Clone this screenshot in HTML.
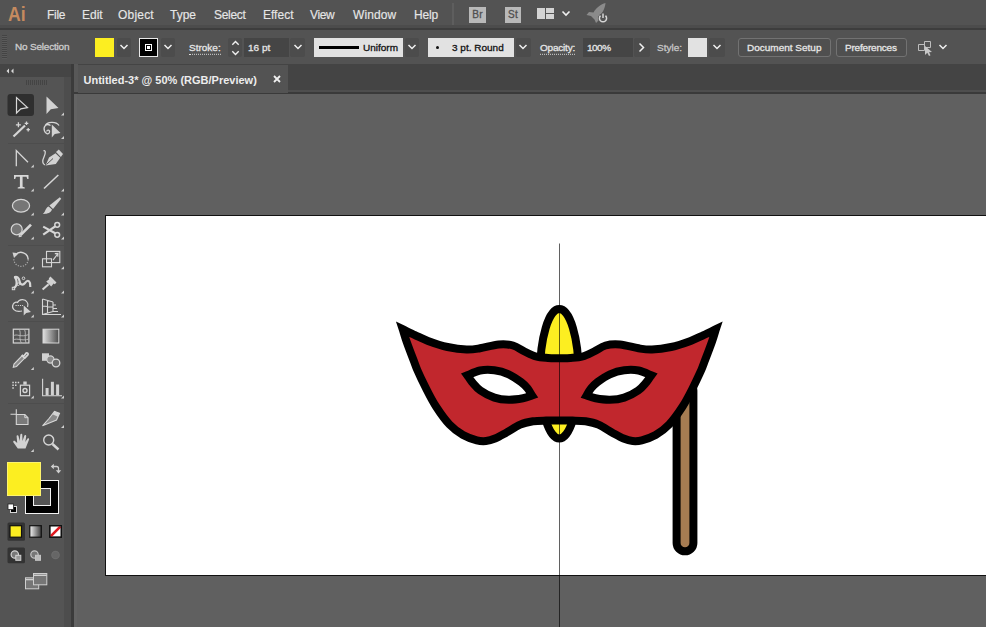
<!DOCTYPE html>
<html><head><meta charset="utf-8"><title>Untitled-3</title>
<style>
*{box-sizing:border-box;margin:0;padding:0}
html,body{width:986px;height:627px;overflow:hidden;background:#606060;font-family:"Liberation Sans",sans-serif;color:#e4e4e4}
.a{position:absolute}
.t{position:absolute;white-space:nowrap;font-size:12px;line-height:14px;color:#e6e6e6}
#menubar{left:0;top:0;width:986px;height:30px;background:linear-gradient(to bottom,#535353 0,#535353 25.500px,#4c4c4c 25.500px,#4c4c4c 28px,#3d3d3d 28px,#3d3d3d 30px)}
#ctrl{left:0;top:30px;width:986px;height:34px;background:#535353}
#tabbar{left:74px;top:64px;width:912px;height:30px;background:linear-gradient(to bottom,#444 0,#444 26px,#4e4e4e 26px,#4e4e4e 28px,#3a3a3a 28px,#3a3a3a 30px)}
#tab{left:77px;top:65px;width:210.500px;height:27.500px;background:#535353}
#tools{left:0;top:64px;width:72px;height:563px;background:linear-gradient(to right,#545454 0,#545454 64.5px,#4d4d4d 64.5px,#4d4d4d 72px)}
#toolshead{left:0;top:64px;width:72px;height:13px;background:#454545}
#toolsedge{left:71px;top:64px;width:7px;height:563px;background:linear-gradient(to right,#3b3b3b 0,#3b3b3b 3px,#636363 3px,#636363 6.5px,#606060 6.5px)}
#artboard{left:105px;top:215px;width:900px;height:361px;background:#fff;border:1px solid #111}
.dd{position:absolute;background:#4c4c4c;border-radius:2px}
.c{-webkit-text-stroke:0.3px currentColor;transform:scaleY(0.92);transform-origin:0 79%}
.m{-webkit-text-stroke:0.15px currentColor;transform:scaleY(1.06);transform-origin:0 80%}
.lbox{position:absolute;background:#e2e2e2}
.dbox{position:absolute;background:#454545}
.btn{position:absolute;border:1px solid #727272;border-radius:3px;background:#4f4f4f}
</style></head><body>
<div class="a" id="menubar"></div>
<div class="a" id="ctrl"></div>
<div class="a" id="tabbar"></div>
<div class="a" id="tab"></div>
<div class="a" id="tools"></div>
<div class="a" id="toolshead"></div>
<div class="a" id="toolsedge"></div>
<div class="a" style="left:74px;top:64px;width:4px;height:30px;background:linear-gradient(to bottom,#585858 0,#585858 28.500px,#3a3a3a 28.500px)"></div>
<div class="a" id="artboard"></div>

<!-- MENU -->
<div class="t" style="left:8px;top:1px;font-size:21px;line-height:26px;font-weight:bold;color:#c58a5f;transform:scaleX(0.84);transform-origin:0 0">Ai</div>
<div class="t m" style="left:47px;top:8px;letter-spacing:-0.3px">File</div>
<div class="t m" style="left:82px;top:8px">Edit</div>
<div class="t m" style="left:118px;top:8px;letter-spacing:0.2px">Object</div>
<div class="t m" style="left:170px;top:8px">Type</div>
<div class="t m" style="left:214px;top:8px;letter-spacing:-0.3px">Select</div>
<div class="t m" style="left:263px;top:8px">Effect</div>
<div class="t m" style="left:310px;top:8px;letter-spacing:-0.4px">View</div>
<div class="t m" style="left:353px;top:8px;letter-spacing:0.1px">Window</div>
<div class="t m" style="left:414px;top:8px;letter-spacing:-0.15px">Help</div>

<!-- MENUX -->
<div class="a" style="left:452px;top:3px;width:2px;height:22px;background:#5e5e5e"></div>
<div class="a" style="left:469px;top:7px;width:17px;height:16px;background:#b9b9b9"></div>
<div class="t" style="left:469px;top:8px;width:17px;text-align:center;font-size:10px;color:#505050;letter-spacing:0.3px;-webkit-text-stroke:0.3px #505050">Br</div>
<div class="a" style="left:505px;top:7px;width:16px;height:16px;background:#b9b9b9"></div>
<div class="t" style="left:505px;top:8px;width:16px;text-align:center;font-size:10px;color:#505050;letter-spacing:0.3px;-webkit-text-stroke:0.3px #505050">St</div>
<div class="a" style="left:537px;top:8px;width:8px;height:11px;background:#d4d4d4"></div>
<div class="a" style="left:546px;top:8px;width:8px;height:5px;background:#d4d4d4"></div>
<div class="a" style="left:546px;top:14px;width:8px;height:5px;background:#d4d4d4"></div>
<svg class="a" style="left:561px;top:9px" width="10" height="8"><path d="M1.500 2.500 L5 6 L8.500 2.500" fill="none" stroke="#f0f0f0" stroke-width="1.600"/></svg>
<svg class="a" style="left:584px;top:0" width="28" height="28" viewBox="584 0 28 28"><path d="M605.500 3 C601 4 596 8 593.500 12.500 L589 12 L586.500 15 L591 16 L594.500 19.500 L596 23 L598.500 20.500 L598 17 C602 14 605 9 605.500 3 Z" fill="#8b8b8b"/><circle cx="603" cy="18.200" r="4.800" fill="#535353"/><path d="M600.500 15.600 A3.600 3.600 0 1 0 605.500 15.600" fill="none" stroke="#d6d6d6" stroke-width="1.500"/><path d="M603 13.500 V18" stroke="#d6d6d6" stroke-width="1.500"/></svg>
<div class="t" style="left:83.500px;top:72.800px;font-size:11px;font-weight:bold;color:#ededed;transform:scaleY(0.95);transform-origin:0 79%" id="tabtxt">Untitled-3* @ 50% (RGB/Preview)</div>
<svg class="a" style="left:272px;top:74px" width="10" height="10"><path d="M2 2 L8 8 M8 2 L2 8" stroke="#f0f0f0" stroke-width="1.800" fill="none"/></svg>
<!-- /MENUX -->
<!-- CONTROL BAR -->
<div class="a" style="left:2px;top:35px;width:5px;height:24px;background:repeating-linear-gradient(to bottom,#444 0,#444 1px,#5a5a5a 1px,#5a5a5a 2px)"></div>
<div class="t c" style="left:15px;top:40px;font-size:10px;letter-spacing:-0.2px;color:#cdcdcd" id="nosel">No Selection</div>
<div class="a" style="left:95px;top:38px;width:19px;height:19px;background:#fcee21"></div>
<div class="dd" style="left:117px;top:38px;width:14px;height:19px"></div>
<svg class="a" style="left:119px;top:43px" width="10" height="8"><path d="M1.5 2 L5 5.5 L8.5 2" fill="none" stroke="#f0f0f0" stroke-width="1.5"/></svg>
<div class="a" style="left:139px;top:38px;width:19px;height:19px;background:#000;border:1px solid #e8e8e8"></div>
<div class="a" style="left:145px;top:44px;width:7px;height:7px;background:#000;border:1px solid #fff"></div>
<div class="a" style="left:147px;top:46px;width:3px;height:3px;background:#fff"></div>
<div class="dd" style="left:161px;top:38px;width:14px;height:19px"></div>
<svg class="a" style="left:163px;top:43px" width="10" height="8"><path d="M1.5 2 L5 5.5 L8.5 2" fill="none" stroke="#f0f0f0" stroke-width="1.5"/></svg>
<div class="t c" style="left:189px;top:41px;font-size:10px;border-bottom:1px dotted #ddd;line-height:13px" id="stroke">Stroke:</div>
<div class="dd" style="left:228px;top:38px;width:14px;height:19px"></div>
<svg class="a" style="left:230px;top:38px" width="11" height="20"><path d="M2.3 6.8 L5.5 3.6 L8.7 6.8 M2.3 13.2 L5.5 16.4 L8.7 13.2" fill="none" stroke="#f0f0f0" stroke-width="1.4"/></svg>
<div class="dbox" style="left:244px;top:38px;width:45px;height:19px"></div>
<div class="t c" style="left:248px;top:41px;font-size:10px" id="pt16">16 pt</div>
<div class="dd" style="left:290px;top:38px;width:15px;height:19px"></div>
<svg class="a" style="left:293px;top:43px" width="10" height="8"><path d="M1.5 2 L5 5.5 L8.5 2" fill="none" stroke="#f0f0f0" stroke-width="1.5"/></svg>
<div class="lbox" style="left:314px;top:38px;width:89px;height:19px"></div>
<div class="a" style="left:319px;top:46px;width:40px;height:3px;background:#000"></div>
<div class="t c" style="left:363px;top:41px;font-size:10px;color:#111" id="uniform">Uniform</div>
<div class="dd" style="left:405px;top:38px;width:14px;height:19px"></div>
<svg class="a" style="left:407px;top:43px" width="10" height="8"><path d="M1.5 2 L5 5.5 L8.5 2" fill="none" stroke="#f0f0f0" stroke-width="1.5"/></svg>
<div class="lbox" style="left:428px;top:38px;width:86px;height:19px"></div>
<div class="a" style="left:436px;top:46px;width:3px;height:3px;border-radius:50%;background:#111"></div>
<div class="t c" style="left:452px;top:41px;font-size:10px;color:#111" id="round">3 pt. Round</div>
<div class="dd" style="left:516px;top:38px;width:15px;height:19px"></div>
<svg class="a" style="left:518px;top:43px" width="10" height="8"><path d="M1.5 2 L5 5.5 L8.5 2" fill="none" stroke="#f0f0f0" stroke-width="1.5"/></svg>
<div class="t c" style="left:540px;top:41px;font-size:10px;border-bottom:1px dotted #ddd;line-height:13px;letter-spacing:-0.2px" id="opacity">Opacity:</div>
<div class="dbox" style="left:583px;top:38px;width:50px;height:19px"></div>
<div class="t c" style="left:587px;top:41px;font-size:10px;letter-spacing:-0.5px" id="pct">100%</div>
<div class="dd" style="left:634px;top:38px;width:16px;height:19px"></div>
<svg class="a" style="left:637px;top:42px" width="9" height="11"><path d="M2.5 1.5 L6.5 5.5 L2.5 9.5" fill="none" stroke="#f0f0f0" stroke-width="1.5"/></svg>
<div class="t c" style="left:657px;top:41px;font-size:10px;color:#c8c8c8" id="style">Style:</div>
<div class="lbox" style="left:688px;top:38px;width:19px;height:19px"></div>
<div class="dd" style="left:709px;top:38px;width:16px;height:19px"></div>
<svg class="a" style="left:712px;top:43px" width="10" height="8"><path d="M1.5 2 L5 5.5 L8.5 2" fill="none" stroke="#f0f0f0" stroke-width="1.5"/></svg>
<div class="btn" style="left:738px;top:38px;width:93px;height:19px"></div>
<div class="t c" style="left:747px;top:41px;font-size:10px" id="docsetup">Document Setup</div>
<div class="btn" style="left:836px;top:38px;width:71px;height:19px"></div>
<div class="t c" style="left:845px;top:41px;font-size:10px;letter-spacing:-0.2px" id="prefs">Preferences</div>
<svg class="a" style="left:916px;top:38px" width="20" height="20"><path d="M2.5 6.5h6v6h-6z M8.5 3.5h6v6h-6z" fill="none" stroke="#bdbdbd" stroke-width="1"/><path d="M9 8 L9 17 L11.3 14.8 L13 18 L14.5 17.3 L13 14.2 L16 14 Z" fill="#c8c8c8"/></svg>
<svg class="a" style="left:938px;top:43px" width="10" height="8"><path d="M1.5 2 L5 5.5 L8.5 2" fill="none" stroke="#f0f0f0" stroke-width="1.5"/></svg>

<!-- TOOLS -->
<svg class="a" style="left:0;top:0" width="80" height="627" viewBox="0 0 80 627" id="toolsvg">
<g fill="none" stroke="#d6d6d6" stroke-width="1.2" stroke-linejoin="miter">
<!-- header -->
<path d="M9 68.5 L6.5 71 L9 73.5 Z M13.5 68.5 L11 71 L13.5 73.5 Z" fill="#d8d8d8" stroke="none"/>
<path d="M26.500 80v5M28.500 80v5M30.500 80v5M32.500 80v5M34.500 80v5M36.500 80v5M38.500 80v5M40.500 80v5M42.500 80v5M44.500 80v5M46.500 80v5" stroke="#444" stroke-width="1"/>
<!-- separators -->
<path d="M8 143.500H64M8 245.500H64M8 321.500H64M8 403.500H64" stroke="#4d4d4d" stroke-width="1"/>
<!-- selected bg -->
<rect x="7.500" y="94" width="26.500" height="22" rx="3" fill="#2f2f2f" stroke="none"/>
<!-- corner triangles -->
<g fill="#d0d0d0" stroke="none">
<path d="M64 112.400V115.400H61z"/><path d="M64 136V139H61z"/>
<path d="M33.800 164.600V167.600H30.800z"/>
<path d="M33.800 188.600V191.600H30.800z"/><path d="M64 188.600V191.600H61z"/>
<path d="M33.800 212.600V215.600H30.800z"/><path d="M64 212.600V215.600H61z"/>
<path d="M33.800 236.600V239.600H30.800z"/><path d="M64 236.600V239.600H61z"/>
<path d="M33.800 266.300V269.300H30.800z"/><path d="M64 266.300V269.300H61z"/>
<path d="M33.800 290.600V293.600H30.800z"/><path d="M64 290.600V293.600H61z"/>
<path d="M33.800 314.600V317.600H30.800z"/><path d="M64 314.600V317.600H61z"/>
<path d="M33.800 367V370H30.800z"/>
<path d="M33.800 395.600V398.600H30.800z"/><path d="M64 395.600V398.600H61z"/>
<path d="M64 425V428H61z"/>
<path d="M33.800 449V452H30.800z"/>
</g>
<!-- 1 selection (outline) -->
<path d="M16.500 97.500 L16.500 113 L20.800 108.800 L27.500 107.600 Z" stroke="#d8d8d8" stroke-width="1.200"/>
<!-- 1b direct selection (filled) -->
<path d="M46.500 96.500 L46.500 114 L50.800 109.300 L58.500 108 Z" fill="#d2d2d2" stroke="none"/>
<!-- 2 magic wand -->
<path d="M13.500 136.500 L25 125.500" stroke-width="2.200"/>
<path d="M18.400 122.300v5M15.900 124.800h5M26.500 121.500v3.600M24.700 123.300h3.600M28.200 128v3.400M26.500 129.700h3.400" stroke-width="1.300"/>
<!-- 2b lasso + arrow -->
<path d="M50.500 125.500 C46 122.500 43 127 44.500 131 C45.500 134 49 135 49.500 132 C50 129.500 46.500 129.500 47 131.500 M45 126 C47 121.500 56 121 59 125.500" stroke-width="1.300"/>
<path d="M51.800 124.500 L51.800 137.500 L54.800 134 L60.500 133 Z" fill="#d2d2d2" stroke="none"/>
<!-- 3 pen-ish (anchor point) -->
<path d="M16.300 166.300 L16.300 150.500 L28 162.300" stroke-width="1.300"/>
<!-- 3b curvature pen -->
<path d="M43.500 151 C45.500 149.500 46 153 44 157 C42 161 42.500 164 45 165" stroke-width="1.300"/>
<path d="M45.600 165.400 L49 157.500 L55.500 153.200 L60.200 157.800 L55.800 164 Z" fill="#d2d2d2" stroke="none"/>
<path d="M56 152 L58.800 149.600 L63 154 L60.800 157 Z" fill="#d2d2d2" stroke="none"/>
<path d="M46.500 164.500 L53 158.500" stroke="#555" stroke-width="1"/>
<!-- 4 type -->
<path d="M14 175 H28.500 V179 H27.300 L26.500 176.800 H22.600 V186.800 L24.800 187.400 V188.600 H17.700 V187.400 L19.900 186.800 V176.800 H16 L15.200 179 H14 Z" fill="#d8d8d8" stroke="none"/>
<!-- 4b line -->
<path d="M44 188.500 L58.300 175" stroke-width="1.600"/>
<!-- 5 ellipse -->
<ellipse cx="21" cy="205.700" rx="8.600" ry="6.400" fill="#767676" stroke-width="1.200"/>
<!-- 5b brush -->
<path d="M59.800 197.300 L61.200 198.700 L53 209 L49.400 205.600 Z" fill="#d2d2d2" stroke="none"/>
<path d="M48.600 206.400 L52 209.600 C51 213 47 214.200 42.800 214 C45.500 212 45.300 207.600 48.600 206.400 Z" fill="#d2d2d2" stroke="none"/>
<!-- 6 shaper -->
<circle cx="16.700" cy="229.400" r="5.500" fill="#767676" stroke-width="1.200"/>
<path d="M31 224.600 L20.500 235.200" stroke-width="2.600"/>
<path d="M18.600 237.200 L18.900 233.600 L22 236.800 Z" fill="#d2d2d2" stroke="none"/>
<!-- 6b scissors -->
<path d="M43.200 226.600 L55.200 233.200 M43.200 234.600 L55.200 226.400" stroke-width="2.200"/>
<circle cx="57.200" cy="224.800" r="2.400" stroke-width="1.500"/>
<circle cx="57.200" cy="234.800" r="2.400" stroke-width="1.500"/>
<!-- 7 rotate -->
<path d="M15.500 255 A7.200 7.200 0 0 1 28.200 259.500" stroke-width="1.500"/>
<path d="M28.200 259.500 A7.200 7.200 0 1 1 13.900 258" stroke-width="1.200" stroke-dasharray="1.200 1.400" stroke="#aaa"/>
<path d="M12.500 252.500 L18.500 253.300 L14 258 Z" fill="#d2d2d2" stroke="none"/>
<!-- 7b scale -->
<rect x="46.500" y="251.400" width="13.300" height="11.200" stroke-width="1.100"/>
<rect x="42.500" y="258.800" width="9" height="8" stroke-width="1.100"/>
<path d="M53 260.200 L57.500 254.200 M54.800 253.600 L58 253.400 L57.800 256.800" stroke-width="1.100"/>
<!-- 8 width/puppet -->
<path d="M13.500 288 C16 287 17 284 16.500 281 C16 278 14.500 278 15 277 C17 276.500 19 278 19.500 281 C20 285 23 285.500 25 283 C27 280 29 280 30 283 L30.300 287" stroke-width="2.200"/>
<circle cx="23.500" cy="278.300" r="1.300" stroke-width="1"/>
<circle cx="18.200" cy="284.200" r="1.300" stroke-width="1"/>
<rect x="12.300" y="287.300" width="2.400" height="2.400" stroke-width="1"/>
<!-- 8b pin -->
<path d="M50.500 276.500 L56.500 282.500 L54.800 284.200 L53.600 283.600 L51.200 286.600 L46.200 281.600 L49.200 279.200 L48.800 278.200 Z" fill="#d2d2d2" stroke="none"/>
<path d="M48.600 284.200 L42.600 289.600" stroke-width="2"/>
<!-- 9 shape builder -->
<path d="M22 311 C14 312.500 11.500 308 13 304.500 C14 302 16.500 302 17.500 302.500 C19 299 25 298.500 27 302 C29 304.500 28 306 27.500 307" stroke-width="1.200"/>
<path d="M15.500 305.500 H23" stroke-width="1.200" stroke-dasharray="1.200 1"/>
<path d="M23.700 305.500 L23.700 315.500 L26.200 313 L31 312 Z" fill="#d2d2d2" stroke="none"/>
<!-- 9b perspective grid -->
<path d="M42.500 299 V315 M42.500 299 L53 302 M42.500 306 L53 307 M42.500 314.500 L53 311.500 M47.500 300.500 V313 M53 302 V311.500 M42.500 314.500 H61 M53 311.500 H58 M53 308.500 H57 M53 305 H56" stroke-width="1.100"/>
<!-- 10 mesh -->
<rect x="13.300" y="329.200" width="15.600" height="13.800" stroke-width="1.200"/>
<path d="M13.300 336 C17 333 20 338 28.900 334.500 M19 329.200 C22 333 18 338 21.500 343 M24.500 329.200 C26.500 333 24 338 26 343 M13.300 340 C17 337.500 22 341.500 28.900 339" stroke-width="0.900" stroke="#bbb"/>
<!-- 10b gradient -->
<defs><linearGradient id="g1" x1="0" x2="1" y1="0" y2="0"><stop offset="0" stop-color="#e0e0e0"/><stop offset="1" stop-color="#4a4a4a"/></linearGradient></defs>
<rect x="43" y="329.200" width="15.800" height="13.800" fill="url(#g1)" stroke-width="1"/>
<!-- 11 eyedropper -->
<path d="M13.300 367.200 L14 364 L22 355.800 L24.500 358.300 L16.500 366.500 Z" stroke-width="1.100" fill="#8a8a8a"/>
<path d="M21.800 354.800 L25.500 358.500 M23.500 356.500 L26 353.200 C27 352 28.800 353.600 27.800 354.900 L25 357.800" stroke-width="1.800"/>
<!-- 11b blend -->
<rect x="42" y="353.300" width="7" height="7.500" fill="#d2d2d2" stroke="none"/>
<circle cx="50.400" cy="359.500" r="3.600" fill="#8a8a8a" stroke-width="1.100"/>
<circle cx="56" cy="363" r="3.800" fill="#6a6a6a" stroke-width="1.300"/>
<!-- 12 symbol sprayer -->
<path d="M12.300 382.500h1.500M15 382.500h1.500M17.700 382.500h1.500M12.300 385.200h1.500M15 385.200h1.500M12.300 388h1.500" stroke-width="1.500"/>
<rect x="20.400" y="385.200" width="9.200" height="10.500" stroke-width="1.200"/>
<rect x="23.300" y="381.500" width="3.400" height="3.200" fill="#d2d2d2" stroke="none"/>
<circle cx="25" cy="390.500" r="2" stroke-width="1.400"/>
<!-- 12b graph -->
<path d="M42.600 378.800 V395.800 H62" stroke-width="1.100"/>
<rect x="45.600" y="388" width="3" height="7.300" fill="#d2d2d2" stroke="none"/>
<rect x="50.900" y="381.800" width="3" height="13.500" fill="#d2d2d2" stroke="none"/>
<rect x="56.100" y="384.500" width="3" height="10.800" fill="#d2d2d2" stroke="none"/>
<!-- 13 artboard -->
<path d="M10.500 414.200 H16.300 M16.300 409.200 V414.200" stroke-width="1.100"/>
<path d="M16.300 414.500 H24.800 L28 417.700 V424.500 H16.300 Z" fill="#7a7a7a" stroke-width="1.100"/>
<path d="M24.800 414.500 V417.700 H28" stroke-width="1"/>
<!-- 13b slice -->
<path d="M42.500 425.800 L49 418.500 L54.500 411.500 L59.500 413.300 L56.500 420 Z" stroke-width="1.100" fill="#8a8a8a"/>
<path d="M54.500 411.500 L59.500 413.300 L57.800 416.800 L52.500 414.300 Z" fill="#d2d2d2" stroke="none"/>
<!-- 14 hand -->
<path d="M17.800 448.500 L13.300 442.300 C12.700 441 14.300 440.300 15.200 441.300 L17.200 443 L16.600 436.300 C16.600 435 18.400 435 18.600 436.200 L19.600 441 L20.300 434.800 C20.500 433.500 22.300 433.600 22.300 434.900 L22.500 441 L24.300 435.800 C24.800 434.600 26.400 435.100 26.200 436.400 L25.300 442 L27.400 438.800 C28.200 437.800 29.600 438.600 29 439.800 L25.500 448.500 Z" fill="#d2d2d2" stroke="none"/>
<!-- 14b zoom -->
<circle cx="48.700" cy="440" r="5" stroke-width="1.400"/>
<path d="M52.500 444 L58.500 449.500" stroke-width="2.400"/>
</g>
</svg>

<!-- /TOOLS -->
<!-- BOTTOM -->
<svg class="a" style="left:0;top:455px" width="80" height="172" viewBox="0 455 80 172" id="swsvg">
<defs><linearGradient id="g2" x1="0" x2="1" y1="0" y2="0"><stop offset="0" stop-color="#f4f4f4"/><stop offset="1" stop-color="#3a3a3a"/></linearGradient></defs>
<!-- stroke swatch -->
<rect x="25.500" y="480.500" width="33" height="33" fill="#000" stroke="#f2f2f2" stroke-width="1"/>
<rect x="33.500" y="488.500" width="17" height="17" fill="#555" stroke="#f2f2f2" stroke-width="1"/>
<!-- fill swatch -->
<rect x="7" y="462" width="34" height="34" fill="#fcee21"/>
<rect x="7.500" y="462.500" width="33" height="33" fill="none" stroke="#fdf6a0" stroke-width="1" opacity="0.600"/>
<!-- swap -->
<path d="M52.500 466.500 H56.500 C58 466.500 58.500 467.500 58.500 468.500 V471" fill="none" stroke="#cfcfcf" stroke-width="1.300"/>
<path d="M53.800 463.800 L50.800 466.500 L53.800 469.200 Z M55.800 470.200 L58.500 473.400 L61.200 470.200 Z" fill="#cfcfcf"/>
<!-- default -->
<rect x="10.500" y="506.500" width="6" height="6" fill="#000" stroke="#d8d8d8" stroke-width="1"/>
<rect x="8" y="504" width="5.500" height="5.500" fill="#fff" stroke="#222" stroke-width="0.800"/>
<!-- color / gradient / none -->
<rect x="7.500" y="522.500" width="17.500" height="18.300" rx="1.500" fill="#333"/>
<rect x="10" y="525.700" width="11.500" height="11.500" fill="#fcee21" stroke="#111" stroke-width="1.200"/>
<rect x="29.800" y="525.700" width="11.500" height="11.500" fill="url(#g2)" stroke="#111" stroke-width="1.200"/>
<rect x="49.800" y="525.700" width="11.500" height="11.500" fill="#fff" stroke="#111" stroke-width="1.200"/>
<path d="M50.800 536.200 L60.300 526.700" stroke="#e0191f" stroke-width="2.600"/>
<rect x="49.800" y="525.700" width="11.500" height="11.500" fill="none" stroke="#111" stroke-width="1.200"/>
<!-- draw modes -->
<rect x="7.500" y="547.600" width="17.500" height="15.600" rx="1.500" fill="#333"/>
<circle cx="14.800" cy="554.500" r="3.700" fill="#777" stroke="#d2d2d2" stroke-width="1.200"/>
<rect x="15.800" y="555.300" width="5" height="5" fill="#999" stroke="#d2d2d2" stroke-width="1"/>
<circle cx="34.500" cy="554.500" r="3.700" fill="#777" stroke="#c4c4c4" stroke-width="1.200"/>
<rect x="35.500" y="555.300" width="5" height="5" fill="#bbb" stroke="#c4c4c4" stroke-width="1"/>
<circle cx="55.500" cy="555" r="3.700" fill="#666" stroke="#6c6c6c" stroke-width="1.200"/>
<!-- screen mode -->
<rect x="25.500" y="577.800" width="13.200" height="11" fill="#767676" stroke="#cfcfcf" stroke-width="1"/>
<path d="M25.500 579.600 H38.700" stroke="#cfcfcf" stroke-width="1.400"/>
<rect x="33.500" y="573.500" width="13.300" height="11.300" fill="#767676" stroke="#cfcfcf" stroke-width="1"/>
<path d="M33.500 575.300 H46.800" stroke="#cfcfcf" stroke-width="1.400"/>
</svg>

<!-- /BOTTOM -->
<!-- ARTWORK -->
<svg class="a" style="left:0;top:0" width="986" height="627" viewBox="0 0 986 627" id="art">
<ellipse cx="559.3" cy="373.8" rx="19.3" ry="64.7" fill="#fcee21" stroke="#000" stroke-width="8"/>
<rect x="676.6" y="382" width="16.8" height="169.3" rx="8.4" fill="#a67c52" stroke="#000" stroke-width="8"/>
<path d="M402.7 329.2 C404.8 330.2 410.8 333.2 415.0 335.2 C419.2 337.1 422.6 338.9 428.0 340.9 C433.4 342.9 441.1 345.6 447.5 347.0 C453.9 348.4 461.2 349.4 466.6 349.6 C472.0 349.8 474.6 349.2 480.0 348.3 C485.4 347.4 493.2 345.0 498.7 344.5 C504.2 344.0 508.7 344.3 513.0 345.5 C517.3 346.7 520.7 349.7 524.5 351.5 C528.3 353.3 532.1 355.4 536.0 356.5 C539.9 357.6 544.1 357.7 548.0 358.0 C551.9 358.3 555.5 358.2 559.3 358.2 C563.1 358.2 566.7 358.3 570.6 358.0 C574.5 357.7 578.7 357.6 582.6 356.5 C586.5 355.4 590.3 353.3 594.1 351.5 C597.9 349.7 601.3 346.7 605.6 345.5 C609.9 344.3 614.4 344.0 619.9 344.5 C625.4 345.0 633.2 347.4 638.6 348.3 C643.9 349.2 646.6 349.8 652.0 349.6 C657.4 349.4 664.7 348.4 671.1 347.0 C677.5 345.6 685.2 342.9 690.6 340.9 C696.0 338.9 699.4 337.1 703.6 335.2 C707.8 333.2 713.8 330.2 715.9 329.2 C715.2 331.3 713.8 336.5 712.0 341.6 C710.2 346.7 707.0 355.1 705.2 359.8 C703.4 364.5 703.2 365.6 701.3 370.0 C699.3 374.4 696.6 380.4 693.5 386.5 C690.4 392.6 686.7 400.2 682.6 406.5 C678.5 412.8 673.6 419.8 669.1 424.5 C664.6 429.2 660.1 432.4 655.6 435.0 C651.0 437.6 645.6 439.3 641.8 440.3 C638.0 441.3 635.6 441.3 632.6 441.0 C629.6 440.7 626.9 439.9 623.6 438.5 C620.3 437.1 617.0 435.2 612.8 432.9 C608.6 430.6 602.9 426.5 598.4 424.6 C593.9 422.7 589.9 422.0 585.6 421.3 C581.3 420.6 577.0 420.7 572.6 420.6 C568.2 420.5 563.7 420.6 559.3 420.6 C554.9 420.6 550.4 420.5 546.0 420.6 C541.6 420.7 537.3 420.6 533.0 421.3 C528.7 422.0 524.7 422.7 520.2 424.6 C515.7 426.5 510.0 430.6 505.8 432.9 C501.6 435.2 498.3 437.1 495.0 438.5 C491.7 439.9 489.0 440.7 486.0 441.0 C483.0 441.3 480.6 441.3 476.8 440.3 C473.0 439.3 467.6 437.6 463.0 435.0 C458.4 432.4 454.0 429.2 449.5 424.5 C445.0 419.8 440.1 412.8 436.0 406.5 C431.9 400.2 428.2 392.6 425.1 386.5 C422.0 380.4 419.2 374.4 417.3 370.0 C415.4 365.6 415.2 364.5 413.4 359.8 C411.6 355.1 408.4 346.7 406.6 341.6 C404.8 336.5 403.4 331.3 402.7 329.2Z M467.3 375.3 C469.4 374.5 475.5 371.4 480.0 370.5 C484.5 369.6 489.6 369.6 494.4 370.2 C499.2 370.8 504.3 372.3 508.7 374.3 C513.1 376.3 517.9 379.7 521.0 382.0 C524.1 384.3 525.7 386.1 527.5 388.3 C529.3 390.5 531.2 394.2 532.0 395.4 C530.5 395.9 526.9 397.6 523.0 398.3 C519.1 399.0 513.5 399.9 508.7 399.8 C503.9 399.7 499.1 399.2 494.4 397.6 C489.7 396.1 484.1 393.1 480.4 390.5 C476.7 387.9 474.2 384.5 472.0 382.0 C469.8 379.5 468.1 376.4 467.3 375.3Z M651.3 375.3 C649.2 374.5 643.1 371.4 638.6 370.5 C634.1 369.6 629.0 369.6 624.2 370.2 C619.4 370.8 614.3 372.3 609.9 374.3 C605.5 376.3 600.7 379.7 597.6 382.0 C594.5 384.3 592.9 386.1 591.1 388.3 C589.3 390.5 587.3 394.2 586.6 395.4 C588.1 395.9 591.7 397.6 595.6 398.3 C599.5 399.0 605.1 399.9 609.9 399.8 C614.7 399.7 619.5 399.2 624.2 397.6 C628.9 396.1 634.5 393.1 638.2 390.5 C641.9 387.9 644.4 384.5 646.6 382.0 C648.8 379.5 650.5 376.4 651.3 375.3Z" fill="#c1272d" fill-rule="evenodd" stroke="#000" stroke-width="8" stroke-linejoin="miter" stroke-miterlimit="10"/>
<rect x="559" y="243.500" width="1" height="384" fill="#000" fill-opacity="0.62"/>
</svg>
</body></html>
